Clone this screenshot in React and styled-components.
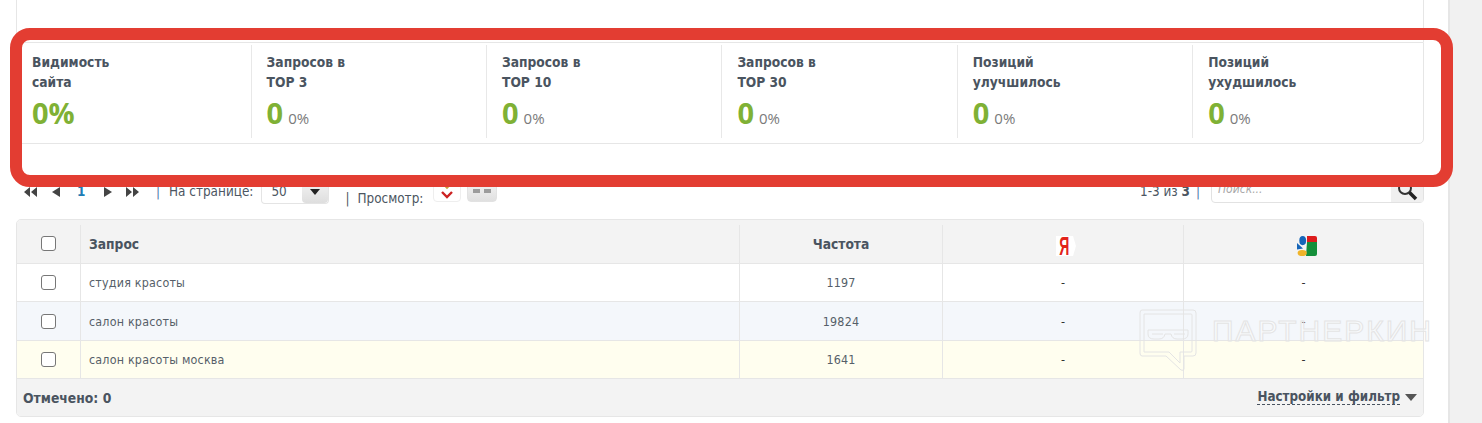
import styled, { createGlobalStyle } from 'styled-components'

const GlobalStyle = createGlobalStyle`
  html, body {
    margin: 0;
    padding: 0;
    height: 423px;
    overflow: hidden;
    background: #fff;
  }
  body {
    font-family: 'DejaVu Sans Condensed', 'DejaVu Sans', Tahoma, sans-serif;
    font-size: 12px;
    color: #4c5662;
  }
`

const Page = styled.div`
  position: relative;
  display: flex;
  width: 1482px;
  height: 423px;
  overflow: hidden;
`

const Content = styled.main`
  width: 1408px;
  margin-left: 16px;
  margin-right: 24px;
  flex: none;
`

const Side = styled.aside`
  flex: 1;
  background: #f1f1f1;
  border-left: 2px solid #e6e6e6;
`

const Blank = styled.div`
  height: 42px;
  border-left: 1px solid #e6e6e6;
  border-right: 1px solid #e6e6e6;
  box-sizing: border-box;
`

const Stats = styled.section`
  display: grid;
  grid-template-columns: 233.6px repeat(4, 235.4px) 1fr;
  height: 102px;
  box-sizing: border-box;
  padding-top: 2px;
  border: 1px solid #e6e6e6;
  border-radius: 0 0 5px 5px;
`

const Stat = styled.div`
  height: 93px;
  padding: 7px 0 0 15px;
  box-sizing: border-box;
  border-left: ${(p) => (p.$first ? 'none' : '1px solid #e8e8e8')};
`

const StatLabel = styled.div`
  font-size: 13.7px;
  font-weight: 700;
  line-height: 20px;
  color: #4a5460;
  white-space: pre-line;
`

const StatValue = styled.div`
  display: flex;
  align-items: baseline;
  gap: 5px;
  margin-top: 3px;
`

const Big = styled.span`
  font-family: 'Open Sans', sans-serif;
  font-size: 29px;
  line-height: 35px;
  font-weight: 700;
  color: #7fb135;
`

const Small = styled.span`
  font-family: 'Open Sans', sans-serif;
  font-size: 15px;
  color: #7a7a7a;
`

const Toolbar = styled.div`
  display: flex;
  justify-content: space-between;
  height: 75px;
  padding-top: 36px;
  box-sizing: border-box;
`

const ToolbarGroup = styled.div`
  display: flex;
  align-items: flex-start;
  height: 26px;
  font-size: 13.4px;
`

const ToolText = styled.span`
  line-height: 24px;
  margin-top: ${(p) => (p.$low ? '7px' : '0')};
`

const Pipe = styled.span`
  line-height: 24px;
  margin-top: ${(p) => (p.$low ? '7px' : '0')};
  margin-left: ${(p) => p.$left}px;
  margin-right: ${(p) => p.$right}px;
  color: ${(p) => p.$color};
`

const PagerIcon = styled.svg`
  height: 10px;
  margin-top: 7px;
  margin-left: ${(p) => p.$left}px;
  flex: none;
  fill: #444;
`

const PageNum = styled.span`
  width: 8px;
  margin-left: 17px;
  line-height: 24px;
  color: #1f7db5;
  font-weight: 700;
`

const Select = styled.div`
  display: flex;
  justify-content: space-between;
  width: 68px;
  height: 24px;
  margin-left: 8px;
  box-sizing: border-box;
  border: 1px solid #e4e4e4;
  border-top: none;
  border-radius: 4px;
  padding-left: 9px;
  line-height: 24px;
`

const SelectButton = styled.span`
  width: 26px;
  height: 23px;
  background: linear-gradient(#f4f4f4, #dedede);
  border-radius: 4px;
  display: flex;
  align-items: center;
  justify-content: center;
  &::after {
    content: '';
    border: 5px solid transparent;
    border-top: 6px solid #222;
    border-bottom: none;
  }
`

const ViewButton = styled.span`
  display: flex;
  align-items: center;
  justify-content: center;
  width: ${(p) => p.$w}px;
  height: 22px;
  margin-left: ${(p) => p.$left}px;
  box-sizing: border-box;
  background: ${(p) => (p.$grey ? 'linear-gradient(#f4f4f4, #e0e0e0)' : '#fff')};
  border: 1px solid ${(p) => (p.$grey ? '#e2e2e2' : '#eee')};
  border-radius: 4px;
`

const SearchBox = styled.div`
  display: flex;
  width: 213px;
  height: 26px;
  margin-left: 11px;
  margin-top: -3px;
  box-sizing: border-box;
  border: 1px solid #e2e2e2;
  border-radius: 4px;
`

const SearchInput = styled.span`
  flex: 1;
  padding: 4px 0 0 6px;
  font-style: italic;
  color: #a9a9a9;
  font-size: 12px;
`

const SearchButton = styled.span`
  display: flex;
  align-items: center;
  justify-content: center;
  width: 32px;
  background: #f0f0f0;
`

const Table = styled.div`
  height: 198px;
  box-sizing: border-box;
  border: 1px solid #e6e6e6;
  border-radius: 5px;
  overflow: hidden;
`

const Row = styled.div`
  display: grid;
  grid-template-columns: 64px 659px 203px 241px 1fr;
  height: ${(p) => p.$h}px;
  box-sizing: border-box;
  background: ${(p) => p.$bg};
  border-bottom: 1px solid #e6e6e6;
`

const Cell = styled.div`
  display: flex;
  align-items: center;
  justify-content: ${(p) => (p.$left ? 'flex-start' : 'center')};
  padding-left: ${(p) => (p.$left ? '8px' : '0')};
  border-right: ${(p) => (p.$last ? 'none' : '1px solid #e6e6e6')};
  font-size: 12.4px;
  color: #565f69;
  letter-spacing: 0.2px;
`

const Dash = styled.span`
  color: #333;
`

const HeadCell = styled(Cell)`
  margin-top: 5px;
  font-size: 13.7px;
  font-weight: 700;
  color: #4a5460;
  letter-spacing: 0;
`

const Check = styled.span`
  width: 13px;
  height: 13px;
  border: 1px solid #777;
  border-radius: 3px;
  background: #fff;
  margin-top: ${(p) => (p.$up ? '-2px' : '0')};
`

const Footer = styled.div`
  display: flex;
  align-items: center;
  justify-content: space-between;
  height: 37px;
  padding: 0 6px;
  background: #f3f3f3;
  font-size: 13.8px;
  font-weight: 700;
  color: #4a5460;
`

const FilterLink = styled.span`
  display: flex;
  align-items: center;
  gap: 5px;
  font-size: 13.3px;
  & > span {
    border-bottom: 1px dashed #4a5460;
    line-height: 14px;
  }
  &::after {
    content: '';
    border: 6px solid transparent;
    border-top: 7px solid #555;
    border-bottom: none;
  }
`

const HeadIcon = styled.svg`
  display: block;
  margin: 3px 0 0 6px;
  overflow: visible;
`

const RedFrame = styled.div`
  position: absolute;
  left: 10px;
  top: 28px;
  width: 1443px;
  height: 159px;
  box-sizing: border-box;
  border: 12px solid #e33d32;
  border-radius: 20px;
  pointer-events: none;
`

const Watermark = styled.div`
  position: absolute;
  left: 1139px;
  top: 309px;
  display: flex;
  align-items: flex-start;
  gap: 15px;
  pointer-events: none;
`

const WatermarkText = styled.span`
  font-family: 'Liberation Sans', sans-serif;
  font-size: 30px;
  line-height: 22px;
  margin-top: 11px;
  letter-spacing: 2px;
  color: rgba(255, 255, 255, 0.4);
  -webkit-text-stroke: 1px #e4e4e4;
`

const rows = [
  { name: 'студия красоты', freq: '1197', bg: '#fff', h: 38 },
  { name: 'салон красоты', freq: '19824', bg: '#f4f7fb', h: 39 },
  { name: 'салон красоты москва', freq: '1641', bg: '#fffeef', h: 38 },
]

const stats = [
  { label: 'Видимость\nсайта', big: '0%' },
  { label: 'Запросов в\nТОР 3', big: '0', small: '0%' },
  { label: 'Запросов в\nТОР 10', big: '0', small: '0%' },
  { label: 'Запросов в\nТОР 30', big: '0', small: '0%' },
  { label: 'Позиций\nулучшилось', big: '0', small: '0%' },
  { label: 'Позиций\nухудшилось', big: '0', small: '0%' },
]

const YandexIcon = () => (
  <HeadIcon width="20" height="20" viewBox="0 0 20 20">
    <path d="M0 0H17L20 10L17 20H0Z" fill="#fff" />
    <text
      transform="translate(8.3 19) scale(0.56 1)"
      textAnchor="middle"
      fontFamily="Liberation Sans"
      fontWeight="700"
      fontSize="25"
      fill="#e2231a"
    >
      Я
    </text>
  </HeadIcon>
)

const GoogleIcon = () => (
  <HeadIcon width="20" height="20" viewBox="0 0 20 20">
    <path d="M10 6H20V18Q20 20 18 20H9Z" fill="#148f3a" />
    <path d="M10 0H18Q20 0 20 2V6H10Z" fill="#dd1c1c" />
    <ellipse cx="5.7" cy="4.6" rx="3.4" ry="4.6" fill="#1565b8" />
    <path d="M0 7L6 12.5L0 13.5Z" fill="#1565b8" />
    <ellipse cx="5.2" cy="17" rx="4.6" ry="3" fill="#f0b429" />
  </HeadIcon>
)

const App = () => (
  <Page>
    <GlobalStyle />
    <Content>
      <Blank />
      <Stats>
        {stats.map((s, i) => (
          <Stat key={s.label} $first={i === 0}>
            <StatLabel>{s.label}</StatLabel>
            <StatValue>
              <Big>{s.big}</Big>
              {s.small && <Small>{s.small}</Small>}
            </StatValue>
          </Stat>
        ))}
      </Stats>
      <Toolbar>
        <ToolbarGroup>
          <PagerIcon $left={8} width="13" viewBox="0 0 13 10"><path d="M0 5L6 0V10ZM7 5L13 0V10Z" /></PagerIcon>
          <PagerIcon $left={15} width="8" viewBox="0 0 8 10"><path d="M0 5L8 0V10Z" /></PagerIcon>
          <PageNum>1</PageNum>
          <PagerIcon $left={19} width="8" viewBox="0 0 8 10"><path d="M0 0L8 5L0 10Z" /></PagerIcon>
          <PagerIcon $left={14} width="13" viewBox="0 0 13 10"><path d="M0 0L6 5L0 10ZM7 0L13 5L7 10Z" /></PagerIcon>
          <Pipe $left={17} $right={9} $color="#4f7ea8">|</Pipe>
          <ToolText>На странице:</ToolText>
          <Select>
            50
            <SelectButton />
          </Select>
          <Pipe $low $left={16} $right={8} $color="#4c5662">|</Pipe>
          <ToolText $low>Просмотр:</ToolText>
          <ViewButton $w={28} $left={10}>
            <svg width="14" height="16" viewBox="0 0 14 16" fill="none" stroke="#cc2222" strokeWidth="2.4">
              <path d="M2 9L7 14L12 9" />
              <path d="M3 1L7 5L11 1" stroke="#c9a23a" strokeWidth="1.6" />
            </svg>
          </ViewButton>
          <ViewButton $w={30} $left={6} $grey>
            <svg width="18" height="4" viewBox="0 0 18 4"><path d="M0 0H7V4H0ZM11 0H18V4H11Z" fill="#9c9c9c" /></svg>
          </ViewButton>
        </ToolbarGroup>
        <ToolbarGroup>
          <ToolText>1-3 из <b>3</b></ToolText>
          <Pipe $left={6} $right={0} $color="#4f7ea8">|</Pipe>
          <SearchBox>
            <SearchInput>Поиск...</SearchInput>
            <SearchButton>
              <svg width="22" height="22" viewBox="0 0 22 22" fill="none">
                <circle cx="9" cy="9" r="6" stroke="#333" strokeWidth="2" />
                <path d="M13.5 13.5L20 20" stroke="#222" strokeWidth="3.5" />
              </svg>
            </SearchButton>
          </SearchBox>
        </ToolbarGroup>
      </Toolbar>
      <Table>
        <Row $h={44} $bg="#f3f3f3">
          <HeadCell><Check $up /></HeadCell>
          <HeadCell $left>Запрос</HeadCell>
          <HeadCell>Частота</HeadCell>
          <HeadCell><YandexIcon /></HeadCell>
          <HeadCell $last><GoogleIcon /></HeadCell>
        </Row>
        {rows.map((r) => (
          <Row key={r.name} $h={r.h} $bg={r.bg}>
            <Cell><Check /></Cell>
            <Cell $left>{r.name}</Cell>
            <Cell>{r.freq}</Cell>
            <Cell><Dash>-</Dash></Cell>
            <Cell $last><Dash>-</Dash></Cell>
          </Row>
        ))}
        <Footer>
          <span>Отмечено: 0</span>
          <FilterLink><span>Настройки и фильтр</span></FilterLink>
        </Footer>
      </Table>
    </Content>
    <Side />
    <RedFrame />
    <Watermark>
      <svg width="58" height="63" viewBox="0 0 58 63" fill="none" stroke="#e4e4e4" strokeWidth="1">
        <path d="M3 1H54Q57 1 57 4V44Q57 47 54 47H45V60Q45 62 42 61L27 47H3Q1 47 1 44V4Q1 1 3 1Z" />
        <path d="M5 5H52Q53 5 53 6V42Q53 43 52 43H41V54L30 43H5Q5 43 5 42Z" />
        <path d="M9 21H49V25Q49 30 43 30H38Q33 30 32 25H26Q25 30 20 30H15Q9 30 9 25Z" />
        <path d="M13 25H24M35 25H46" />
      </svg>
      <WatermarkText>ПАРТНЕРКИН</WatermarkText>
    </Watermark>
  </Page>
)

export default App
